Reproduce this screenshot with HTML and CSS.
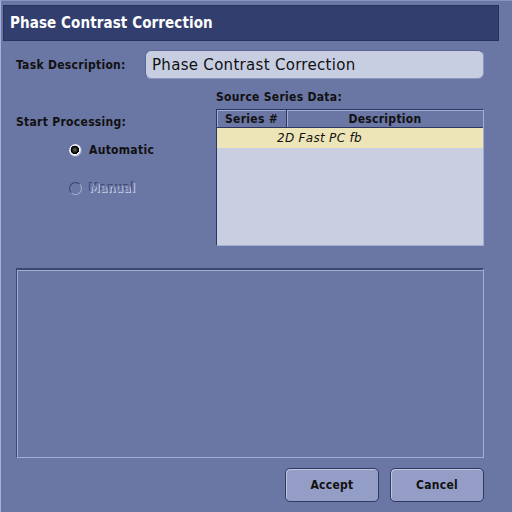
FILE: index.html
```html
<!DOCTYPE html>
<html lang="en">
<head>
    <meta charset="UTF-8">
    <title>Phase Contrast Correction</title>
    <link rel="stylesheet" href="styles.css">
</head>
<body>

<div class="window">
    <div class="titlebar">Phase Contrast Correction</div>

    <div class="task-row">
        <label class="label" for="task">Task Description:</label>
        <input class="task-field" id="task" type="text" value="Phase Contrast Correction">
    </div>

    <div class="middle">
        <!-- Processing mode -->
        <div class="processing">
            <div class="label">Start Processing:</div>
            <div class="radio-list">
                <div class="radio checked"><span class="dot"></span>Automatic</div>
                <div class="radio disabled"><span class="dot"></span>Manual</div>
            </div>
        </div>

        <!-- Source series table -->
        <div class="source">
            <div class="label">Source Series Data:</div>
            <div class="series-table">
                <table>
                    <thead>
                        <tr>
                            <th class="col-num">Series #</th>
                            <th>Description</th>
                        </tr>
                    </thead>
                    <tbody>
                        <tr class="selected">
                            <td class="desc" colspan="2">2D Fast PC fb</td>
                        </tr>
                    </tbody>
                </table>
            </div>
        </div>
    </div>

    <div class="panel"></div>

    <div class="buttons">
        <button>Accept</button>
        <button>Cancel</button>
    </div>
</div>

</body>
</html>
```

FILE: styles.css
```css
body {
    margin: 0;
    padding: 0;
    background-color: #6a76a3;
    font-family: "DejaVu Sans Condensed", "DejaVu Sans", sans-serif;
    color: #111;
}
.window {
    width: 512px;
    height: 512px;
    box-sizing: border-box;
    border-left: 1px solid #a5b0dc;
    border-top: 1px solid #8894c0;
    position: relative;
    overflow: hidden;
}
.titlebar {
    margin: 4px 13px 0 2px;
    height: 34px;
    line-height: 34px;
    padding-left: 6px;
    background-color: #323f6e;
    border: 1px solid #26325c;
    color: #fff;
    font-weight: bold;
    font-size: 15px;
    letter-spacing: 0.1px;
}
.label {
    font-weight: bold;
    font-size: 12px;
    letter-spacing: 0.3px;
    color: #111;
}
.task-row {
    display: flex;
    align-items: center;
    margin: 9px 0 0 15px;
}
.task-row .label {
    width: 129px;
}
.task-field {
    width: 339px;
    height: 29px;
    box-sizing: border-box;
    margin: 0;
    padding: 0 6px;
    border: 1px solid #8b95bd;
    border-top-color: #5a668f;
    border-left-color: #5a668f;
    border-radius: 6px;
    background-color: #c8cee2;
    font-family: "DejaVu Sans", sans-serif;
    font-size: 15px;
    letter-spacing: 0.3px;
    color: #111;
    outline: none;
}

/* Start processing + source table */
.middle {
    display: flex;
    margin: 11px 0 0 15px;
}
.processing {
    width: 200px;
    padding-top: 25px;
}
.radio-list {
    display: flex;
    flex-direction: column;
    gap: 20px;
    margin: 12px 0 0 53px;
}
.radio {
    display: flex;
    align-items: center;
    gap: 7px;
    height: 18px;
    font-weight: bold;
    font-size: 12px;
    letter-spacing: 0.3px;
}
.radio .dot {
    width: 13px;
    height: 13px;
    border-radius: 50%;
    box-sizing: border-box;
}
.radio.checked .dot {
    background: radial-gradient(circle at 45% 45%, #666 0, #000 3.5px, #000 4px, #fff 4.5px, #e4e6ee 5.5px, #8d96b8 6.5px);
}
.radio.disabled {
    color: #6d79a6;
    text-shadow: 1px 1px 0 #c3cae6, -1px -1px 0 #3d4870;
}
.radio.disabled .dot {
    border: 1px solid #a9b2d6;
    border-top-color: #38426a;
    border-left-color: #38426a;
}
.source {
    width: 268px;
}
.series-table {
    margin-top: 5px;
    height: 137px;
    box-sizing: border-box;
    border: 1px solid #a2acd4;
    border-top-color: #2c3660;
    border-left-color: #2c3660;
    background-color: #c9cfe1;
}
table {
    width: 100%;
    border-collapse: collapse;
}
th {
    height: 17px;
    padding: 0;
    font-size: 12px;
    font-weight: bold;
    letter-spacing: 0.3px;
    text-align: center;
    background-color: #6a76a3;
    border-right: 1px solid #2c3660;
    border-bottom: 1px solid #2c3660;
    box-shadow: inset 1px 1px 0 #a2acd4;
}
th:last-child {
    border-right: none;
}
.col-num {
    width: 69px;
}
td {
    height: 20px;
    padding: 0;
    font-size: 12px;
}
tr.selected td {
    background-color: #ede5b8;
}
td.desc {
    font-family: "DejaVu Sans", sans-serif;
    font-style: italic;
    letter-spacing: 0.3px;
    padding-left: 60px;
}

/* Empty sunken panel */
.panel {
    margin: 22px 0 0 15px;
    width: 468px;
    height: 190px;
    box-sizing: border-box;
    border: 1px solid #a2acd4;
    border-top: 2px solid;
    border-top-color: #3d4872;
    border-left: 1px solid #3d4872;
    box-shadow: inset 0 1px 0 #a2acd4, inset 1px 0 0 #a2acd4;
}

.buttons {
    display: flex;
    justify-content: flex-end;
    gap: 11px;
    width: 483px;
    margin-top: 10px;
}
button {
    width: 94px;
    height: 34px;
    margin: 0;
    padding: 0;
    border: 1px solid #2e3860;
    border-radius: 5px;
    background-color: #949dc6;
    box-shadow: inset 1px 1px 0 #c0c7e3;
    font-family: "DejaVu Sans Condensed", "DejaVu Sans", sans-serif;
    font-weight: bold;
    font-size: 12px;
    letter-spacing: 0.3px;
    color: #111;
}
```
